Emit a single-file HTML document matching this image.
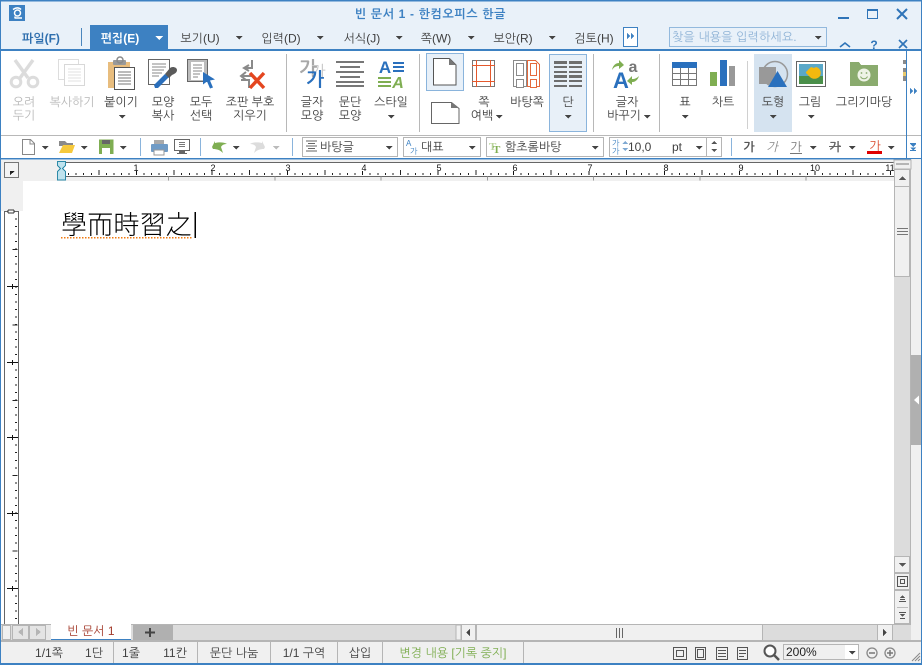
<!DOCTYPE html>
<html lang="ko"><head><meta charset="utf-8"><title>빈 문서 1 - 한컴오피스 한글</title>
<style>
html,body{margin:0;padding:0;background:#fff;overflow:hidden;width:922px;height:665px}
svg{display:block;position:absolute;left:0;top:0}
text{font-family:"Liberation Sans","NanumGothic","Noto Sans CJK KR",sans-serif;font-size:12px;fill:#404040}
.c{text-anchor:middle}
.d{fill:#b8b8b8}
.n{font-size:9px;fill:#111;text-anchor:middle;font-family:"Liberation Sans",sans-serif}
.k{font-family:"NanumGothic","Noto Sans CJK KR",sans-serif}
</style></head><body>
<svg width="922" height="665" viewBox="0 0 922 665" xmlns="http://www.w3.org/2000/svg" shape-rendering="crispEdges">
<defs>
<path id="a" d="M-3.5 0h7l-3.500 3.500z" fill="#444"/>
<path id="w" d="M-4 0h8l-4 4z" fill="#fff"/>
</defs>

<!-- window base -->
<rect width="922" height="665" fill="#fff"/>
<rect x="0" y="0" width="922" height="50" fill="#e9f1f9"/>
<!-- title -->
<rect x="9" y="5" width="16" height="16" fill="#3d81c2"/>
<g shape-rendering="auto"><path d="M13 9.500c3-2 6-2 8 0" fill="none" stroke="#fff" stroke-width="1.500"/><circle cx="17.500" cy="13" r="3" fill="none" stroke="#fff" stroke-width="1.500"/><path d="M15 18h7M15 16.500v2" fill="none" stroke="#fff" stroke-width="1.500"/></g>
<text x="430.500" y="18" class="c" style="fill:#3d81c2;font-weight:bold;letter-spacing:.65px">빈 문서 1 - 한컴오피스 한글</text>
<rect x="838" y="17" width="11" height="2" fill="#2f74b8"/>
<rect x="867.500" y="9.500" width="10" height="9" fill="none" stroke="#2f74b8"/><rect x="867" y="9" width="11" height="2" fill="#2f74b8"/>
<path d="M897 9l10 10M907 9l-10 10" stroke="#2f74b8" stroke-width="2" fill="none" shape-rendering="auto"/>

<!-- tabs -->
<text x="41" y="42.500" class="c" style="fill:#2f6fae;font-weight:bold">파일(F)</text>
<rect x="81" y="28" width="1" height="18" fill="#4a86bd"/>
<rect x="90" y="25" width="78" height="25" fill="#3d81c2"/>
<text x="120" y="42.500" class="c" style="fill:#fff;font-weight:bold">편집(E)</text>
<use href="#w" x="159" y="36"/>
<text x="200" y="42.500" class="c">보기(U)</text><use href="#a" x="239" y="36"/>
<text x="281" y="42.500" class="c">입력(D)</text><use href="#a" x="320" y="36"/>
<text x="362" y="42.500" class="c">서식(J)</text><use href="#a" x="399" y="36"/>
<text x="436" y="42.500" class="c">쪽(W)</text><use href="#a" x="471" y="36"/>
<text x="513" y="42.500" class="c">보안(R)</text><use href="#a" x="552" y="36"/>
<text x="594" y="42.500" class="c">검토(H)</text>
<rect x="623.500" y="27.500" width="14" height="19" fill="#fff" stroke="#3d81c2"/>
<path d="M627 33l3 3-3 3zM631 33l3 3-3 3z" fill="#3d81c2"/>
<rect x="669.500" y="27.500" width="157" height="19" fill="#e9f1f9" stroke="#93b9dd"/>
<text x="672" y="41" style="fill:#8fb3d6;letter-spacing:.15px">찾을 내용을 입력하세요.</text>
<use href="#a" x="818" y="36"/>
<path d="M840 47l5-4 5 4" stroke="#2f74b8" stroke-width="1.600" fill="none" shape-rendering="auto"/>
<text x="874" y="49" class="c" style="fill:#2f74b8;font-weight:bold;font-size:12px">?</text>
<path d="M899 40l8 8M907 40l-8 8" stroke="#2f74b8" stroke-width="1.700" fill="none" shape-rendering="auto"/>

<rect x="0" y="49" width="922" height="2" fill="#3d81c2"/>

<!-- ribbon separators -->
<rect x="286" y="54" width="1" height="78" fill="#b8b8b8"/>
<rect x="419" y="54" width="1" height="78" fill="#b8b8b8"/>
<rect x="593" y="54" width="1" height="78" fill="#b8b8b8"/>
<rect x="659" y="54" width="1" height="78" fill="#b8b8b8"/>
<rect x="747" y="61" width="1" height="68" fill="#d0d0d0"/>

<!-- ribbon highlights -->
<rect x="426.500" y="53.500" width="37" height="37" fill="#e8f0f8" stroke="#8ab4dc"/>
<rect x="549.500" y="54.500" width="37" height="77" fill="#e8f0f8" stroke="#8ab4dc"/>
<rect x="754" y="54" width="38" height="78" fill="#d5e3f0"/>

<g shape-rendering="auto">
<!-- scissors -->
<g fill="none" stroke="#dcdcdc">
<path d="M15 60l13 18M33 60l-13 18" stroke-width="3.400"/>
<circle cx="16" cy="82" r="4.800" stroke-width="3"/><circle cx="33" cy="82" r="4.800" stroke-width="3"/>
</g>
<!-- copy -->
<path d="M58.500 59.500h20v20h-20z" fill="#fff" stroke="#dddddd"/>
<path d="M64.500 64.500h20v21h-20z" fill="#fff" stroke="#d8d8d8"/>
<path d="M68 69h13M68 72h13M68 75h13M68 78h13M68 81h13" stroke="#e2e2e2"/>
<!-- paste -->
<rect x="108" y="62" width="22" height="26" fill="#e8bd7e"/>
<rect x="113" y="60" width="13" height="5" rx="1" fill="#9a9a9a"/><circle cx="120" cy="60" r="3" fill="none" stroke="#8a8a8a" stroke-width="1.500"/>
<rect x="114.500" y="67.500" width="20" height="22" fill="#fff" stroke="#555"/>
<path d="M118 72h13M118 75h13M118 78h13M118 81h13M118 84h13" stroke="#777"/>
<!-- format copy -->
<rect x="148.500" y="59.500" width="21" height="25" fill="#fff" stroke="#666"/>
<path d="M152 64h14M152 67h14M152 70h12M152 73h10M152 76h7" stroke="#8a8a8a"/>
<path d="M155 88l-1-3 11-11 4 3-11 11z" fill="#2a6ebb"/>
<path d="M165 74l5-6c2-2 7-1 7 2 0 3-3 4-5 5l-3 3z" fill="#5a5a5a"/>
<!-- select all -->
<rect x="187.500" y="59.500" width="20" height="22" fill="#bcbcbc" stroke="#666"/>
<rect x="191" y="62" width="13" height="18" fill="#fff"/>
<path d="M193 65h9M193 68h9M193 71h9M193 74h7M193 77h5" stroke="#888"/>
<path d="M203 72l12 7.500-5 1 3 7-3 1-3-7-4 3z" fill="#2a70bd"/>
<!-- clear marks -->
<path d="M252 60v8h-8M249 65l-5 3 5 3M252 76h-10M246 72l-5 4 5 4" fill="none" stroke="#8a8a8a" stroke-width="2"/>
<path d="M241 80h8v8" fill="none" stroke="#8a8a8a" stroke-width="2"/>
<path d="M250 73l14 15M264 73l-14 15" stroke="#e4461f" stroke-width="3.400"/>
<!-- char shape -->
<text x="308" y="75" class="c k" style="font-size:19px;font-weight:bold;fill:#a8a8a8">가</text>
<text x="318" y="77" class="c k" style="font-size:16px;fill:#c8c8c8">가</text>
<text x="315" y="86" class="c k" style="font-size:19px;font-weight:bold;fill:#2a70bd">가</text>
</g>
<!-- para -->
<g fill="#777"><rect x="336" y="61" width="28" height="2"/><rect x="340" y="66" width="20" height="2"/><rect x="336" y="71" width="28" height="2"/><rect x="340" y="76" width="20" height="2"/><rect x="336" y="81" width="28" height="2"/><rect x="336" y="85" width="28" height="2"/></g>
<!-- style -->
<text x="385" y="73" class="c" style="font-size:17px;font-weight:bold;fill:#2a70bd">A</text>
<g fill="#2a70bd"><rect x="393" y="62" width="11" height="2"/><rect x="393" y="66" width="11" height="2"/><rect x="393" y="70" width="11" height="2"/></g>
<g fill="#7fae52"><rect x="378" y="77" width="13" height="2"/><rect x="378" y="81" width="13" height="2"/><rect x="378" y="85" width="13" height="2"/></g>
<text x="398" y="88" class="c" style="font-size:16px;font-weight:bold;font-style:italic;fill:#7fae52">A</text>
<g shape-rendering="auto">
<!-- page icons -->
<path d="M433.500 58.500h16l6.500 6.500v20h-22.500z" fill="#fff" stroke="#555" stroke-width="1"/><path d="M449 58l7 7h-7z" fill="#777"/>
<path d="M431.500 102.500h20l7.500 6v15h-27.500z" fill="#fff" stroke="#666"/><path d="M451 102l8 6h-8z" fill="#777"/>
</g>
<!-- margin -->
<rect x="472.500" y="60.500" width="22" height="26" fill="#fff" stroke="#777"/>
<path d="M476.500 60v27M490.500 60v27M472 65.500h23M472 81.500h23" stroke="#e4582c" fill="none"/>
<!-- master page -->
<rect x="513.500" y="60.500" width="13" height="26" fill="#fff" stroke="#8a8a8a"/><rect x="516.500" y="63.500" width="7" height="12" fill="#fff" stroke="#8a8a8a"/><rect x="516.500" y="79.500" width="7" height="8" fill="#fff" stroke="#8a8a8a"/>
<path d="M527.500 60.500h8l4 4v22h-12z" fill="#fff" stroke="#e4693c"/><rect x="530.500" y="63.500" width="6" height="12" fill="#fff" stroke="#e4693c"/><rect x="530.500" y="79.500" width="6" height="8" fill="#fff" stroke="#e4693c"/>
<!-- columns -->
<g fill="#6e6e6e"><rect x="554" y="61" width="13" height="3"/><rect x="569" y="61" width="13" height="3"/><rect x="554" y="66" width="13" height="2"/><rect x="569" y="66" width="13" height="2"/><rect x="554" y="71" width="13" height="2"/><rect x="569" y="71" width="13" height="2"/><rect x="554" y="75" width="13" height="3"/><rect x="569" y="75" width="13" height="3"/><rect x="554" y="80" width="13" height="2"/><rect x="569" y="80" width="13" height="2"/><rect x="554" y="85" width="13" height="2"/><rect x="569" y="85" width="13" height="2"/></g>
<g shape-rendering="auto">
<!-- replace -->
<text x="621" y="88" class="c" style="font-size:22px;font-weight:bold;fill:#2a70bd">A</text>
<text x="633" y="72" class="c" style="font-size:16px;font-weight:bold;fill:#777">a</text>
<path d="M612 70c1-5 4-7 7-7l0-3 5 5-5 4v-3c-3 0-5 1-7 4z" fill="#7fae52"/>
<path d="M639 76c-1 4-4 6-7 6v3l-5-4 5-5v3c3 0 5-1 7-3z" fill="#7fae52"/>
</g>
<!-- table -->
<rect x="672" y="62" width="25" height="6" fill="#2a70bd"/>
<path d="M672.500 68v17.500h24V68M672 73.500h25M672 79.500h25M680.500 68v18M688.500 68v18" fill="none" stroke="#777"/>
<!-- chart -->
<rect x="710" y="72" width="7" height="14" fill="#7fae52"/><rect x="720" y="60" width="7" height="26" fill="#2a70bd"/><rect x="729" y="66" width="6" height="20" fill="#999"/>
<g shape-rendering="auto">
<!-- shape -->
<circle cx="775" cy="74" r="12.500" fill="none" stroke="#999" stroke-width="1.500"/>
<rect x="759" y="67" width="17" height="17" fill="#999"/>
<path d="M777.500 71l9.500 16h-19z" fill="#2a70bd"/>
</g>
<!-- picture -->
<rect x="796.500" y="61.500" width="29" height="25" fill="#fff" stroke="#666"/>
<rect x="799" y="64" width="24" height="20" fill="#5aa8c8"/><rect x="799" y="76" width="24" height="8" fill="#4a8f4a"/>
<g shape-rendering="auto"><path d="M806 72l5-5 3 1 2-1c4 1 6 5 4 9-2 3-7 4-10 1l-4-4z" fill="#f2b90f"/></g>
<!-- gallery -->
<path d="M850 62h9l2 3h17v21h-28z" fill="#8aab6e"/>
<g shape-rendering="auto"><circle cx="864" cy="75" r="6.500" fill="#eef3e6"/><path d="M860.500 76.500c1.500 3 5.500 3 7 0" stroke="#8aab6e" fill="none"/><circle cx="861.500" cy="73" r=".9" fill="#8aab6e"/><circle cx="866.500" cy="73" r=".9" fill="#8aab6e"/></g>
<rect x="903" y="60" width="3" height="21" fill="#8a8a8a"/><rect x="903" y="64" width="3" height="4" fill="#fff"/><rect x="903" y="72" width="3" height="4" fill="#e8c96e"/>

<!-- ribbon labels -->
<g class="c">
<text x="24" y="106" class="c d">오려</text><text x="24" y="119.500" class="c d">두기</text>
<text x="72" y="106" class="c d">복사하기</text>
<text x="121" y="106" class="c">붙이기</text><use href="#a" x="122" y="115"/>
<text x="163" y="106" class="c">모양</text><text x="163" y="119.500" class="c">복사</text>
<text x="201" y="106" class="c">모두</text><text x="201" y="119.500" class="c">선택</text>
<text x="250" y="106" class="c">조판 부호</text><text x="250" y="119.500" class="c">지우기</text>
<text x="312" y="106" class="c">글자</text><text x="312" y="119.500" class="c">모양</text>
<text x="350" y="106" class="c">문단</text><text x="350" y="119.500" class="c">모양</text>
<text x="391" y="106" class="c">스타일</text><use href="#a" x="391" y="115"/>
<text x="484" y="106" class="c">쪽</text><text x="482" y="119.500" class="c">여백</text><use href="#a" x="499" y="115"/>
<text x="527" y="106" class="c">바탕쪽</text>
<text x="568" y="106" class="c">단</text><use href="#a" x="568" y="115"/>
<text x="627" y="106" class="c">글자</text><text x="624" y="119.500" class="c">바꾸기</text><use href="#a" x="647" y="115"/>
<text x="685" y="106" class="c">표</text><use href="#a" x="685" y="115"/>
<text x="723" y="106" class="c">차트</text>
<text x="773" y="106" class="c">도형</text><use href="#a" x="773" y="115"/>
<text x="810" y="106" class="c">그림</text><use href="#a" x="811" y="115"/>
<text x="864" y="106" class="c">그리기마당</text>
</g>

<!-- right ribbon strip -->
<rect x="906" y="51" width="1" height="107" fill="#3d81c2"/>
<path d="M910 88l3 3-3 3zM914 88l3 3-3 3z" fill="#3d81c2"/>

<!-- toolbar -->
<rect x="0" y="135" width="906" height="1" fill="#b8b8b8"/><rect x="907" y="135" width="14" height="1" fill="#b8b8b8"/>
<g shape-rendering="auto">
<path d="M22.500 139.500h8l4 4v11h-12z" fill="#fff" stroke="#888"/><path d="M30 139v5h5" fill="none" stroke="#888"/>
<path d="M59 141h6l2 2h6v3h-14z" fill="#8a8a8a"/><path d="M59 153l4-8h12l-3 8z" fill="#f6c93c"/>
<rect x="99" y="139.500" width="14.500" height="14.500" fill="#7fae52"/><rect x="102" y="140" width="8" height="4" fill="#666"/><rect x="102" y="148" width="8" height="6" fill="#fff"/>
<rect x="151" y="144" width="17" height="8" rx="1" fill="#6f9bc6"/><rect x="154" y="140" width="10" height="4" fill="#aaa"/><rect x="154" y="150" width="10" height="5" fill="#fff" stroke="#999"/>
</g>
<rect x="174.500" y="139.500" width="15" height="11" fill="#fff" stroke="#666"/><path d="M179 142.500h6M179 144.500h6M179 146.500h6" stroke="#777"/><rect x="179" y="151" width="6" height="2" fill="#666"/><rect x="177" y="153" width="10" height="1" fill="#666"/>
<g shape-rendering="auto">
<path d="M212 147l3-6v2c4-1 9-1 12 1-3 0-5 1-6 3l2 6c-3-3-6-4-10-4z" fill="#7fae52"/>
<path d="M265 147l-3-6v2c-4-1-9-1-12 1 3 0 5 1 6 3l-2 6c3-3 6-4 10-4z" fill="#dcdcdc"/>
</g>
<use href="#a" x="45" y="146"/><use href="#a" x="84" y="146"/><use href="#a" x="123" y="146"/><use href="#a" x="236" y="146"/>
<path d="M272.500 146h7l-3.500 3.500z" fill="#bbb"/>
<rect x="140" y="138" width="1" height="18" fill="#8ab4dc"/><rect x="200" y="138" width="1" height="18" fill="#8ab4dc"/><rect x="292" y="138" width="1" height="18" fill="#8ab4dc"/><rect x="731" y="138" width="1" height="18" fill="#8ab4dc"/>

<rect x="302.500" y="137.500" width="95" height="19" fill="#fff" stroke="#b5b5b5"/>
<path d="M306 141h11M308 143.500h7M306 146h11M308 148.500h7M306 151h11" stroke="#666"/>
<text x="320" y="151">바탕글</text><use href="#a" x="389" y="146"/>
<rect x="403.500" y="137.500" width="77" height="19" fill="#fff" stroke="#b5b5b5"/>
<text x="406" y="146" style="font-size:8px;fill:#3d81c2">A</text><text x="410" y="154" style="font-size:8px;fill:#3d81c2">가</text>
<text x="421" y="151">대표</text><use href="#a" x="472" y="146"/>
<rect x="486.500" y="137.500" width="117" height="19" fill="#fff" stroke="#b5b5b5"/>
<text x="489" y="150" style="font-size:11px;font-weight:bold;fill:#b9d39c;font-family:'Liberation Serif',serif">T</text><text x="493" y="153" style="font-size:11px;font-weight:bold;fill:#7fae52;font-family:'Liberation Serif',serif">T</text>
<text x="505" y="151">함초롬바탕</text><use href="#a" x="595" y="146"/>
<rect x="609.500" y="137.500" width="112" height="19" fill="#fff" stroke="#b5b5b5"/><rect x="706" y="138" width="1" height="18" fill="#b5b5b5"/>
<text x="612" y="146" style="font-size:8px;fill:#3d81c2">가</text><text x="612" y="154" style="font-size:8px;fill:#3d81c2">가</text>
<path d="M622 144l3-3 3 3zM622 148h6l-3 3z" fill="#7fa9d2"/>
<text x="628" y="151">10,0</text><text x="672" y="151">pt</text><use href="#a" x="699" y="146"/>
<path d="M711 144l3-3 3 3zM711 149h6l-3 3z" fill="#555"/>
<text x="749" y="151" class="c" style="font-weight:bold;fill:#555">가</text>
<text x="772" y="151" class="c" style="font-style:italic;fill:#888">가</text>
<text x="796" y="151" class="c" style="fill:#777">가</text><rect x="790" y="153" width="12" height="1" fill="#777"/><use href="#a" x="813" y="146"/>
<text x="835" y="151" class="c" style="fill:#666;font-weight:bold">가</text><rect x="829" y="146" width="12" height="1" fill="#666"/><use href="#a" x="852" y="146"/>
<text x="875" y="150" class="c" style="fill:#d8472a">가</text><rect x="867" y="151" width="15" height="3" fill="#e00000"/><use href="#a" x="891" y="146"/>
<rect x="907" y="135" width="14" height="23" fill="#fff"/><rect x="907" y="135" width="14" height="1" fill="#b8b8b8"/>
<path d="M910 143.500h6M910 150.500h6" stroke="#3d81c2"/><path d="M910 144l3 3 3-3zM910 147.500l3 3 3-3z" fill="#3d81c2"/>
<rect x="0" y="158" width="922" height="1.500" fill="#3d81c2"/>

<!-- ruler -->
<rect x="1" y="160" width="893" height="21" fill="#f0f0f0"/>
<rect x="4.500" y="162.500" width="14" height="15" fill="#f4f4f4" stroke="#777"/>
<path d="M10 171h5l-5 4z" fill="#222"/>
<rect x="60" y="162" width="834" height="14" fill="#fff"/>
<rect x="57" y="162" width="837" height="1" fill="#666"/><rect x="57" y="176" width="837" height="1" fill="#666"/>
<line x1="60.600" y1="174" x2="894" y2="174" stroke="#222" stroke-width="2" stroke-dasharray="1 6.540"/>
<line x1="98.300" y1="172.500" x2="894" y2="172.500" stroke="#222" stroke-width="5" stroke-dasharray="1 74.400"/>
<line x1="136" y1="173" x2="894" y2="173" stroke="#111" stroke-width="4" stroke-dasharray="1 74.400"/>
<g>
<text x="136" y="171" class="n">1</text><text x="213" y="171" class="n">2</text><text x="288" y="171" class="n">3</text><text x="364" y="171" class="n">4</text><text x="439" y="171" class="n">5</text><text x="515" y="171" class="n">6</text><text x="590" y="171" class="n">7</text><text x="666" y="171" class="n">8</text><text x="741" y="171" class="n">9</text><text x="815" y="171" class="n">10</text><text x="890" y="171" class="n">11</text>
</g>
<line x1="168" y1="177" x2="894" y2="177" stroke="#999" stroke-width="4" stroke-dasharray="1 105.250" transform="translate(0 1.500)"/>
<path d="M57.500 161.500h8v4l-3 3 3 3v8.500h-8v-8.500l3-3-3-3z" fill="#bfe3ee" stroke="#2d8aa8"/>

<!-- left gutter + vertical ruler -->
<rect x="1" y="181" width="22" height="30" fill="#f0f0f0"/>
<rect x="4" y="211" width="1" height="413" fill="#666"/><rect x="18" y="211" width="1" height="413" fill="#666"/><rect x="4" y="211" width="15" height="1" fill="#666"/>
<rect x="8" y="210" width="6" height="3" rx="1" fill="#fff" stroke="#333"/>
<line x1="16" y1="218.500" x2="16" y2="624" stroke="#222" stroke-width="2" stroke-dasharray="1 6.540"/>
<line x1="15" y1="249" x2="15" y2="624" stroke="#222" stroke-width="5" stroke-dasharray="1 74.400"/>
<g fill="#111"><rect x="7" y="286" width="11" height="1"/><rect x="7" y="362" width="11" height="1"/><rect x="7" y="437" width="11" height="1"/><rect x="7" y="513" width="11" height="1"/><rect x="7" y="588" width="11" height="1"/></g>
<g fill="#111"><rect x="12" y="284" width="1" height="5"/><rect x="12" y="360" width="1" height="5"/><rect x="12" y="435" width="1" height="5"/><rect x="12" y="511" width="1" height="5"/><rect x="12" y="586" width="1" height="5"/></g>

<!-- document text -->
<text x="61" y="234" style="font-family:'Noto Sans CJK KR','WenQuanYi Zen Hei',sans-serif;font-size:26px;font-weight:300;fill:#000;letter-spacing:.2px">學而時習之</text>
<line x1="61" y1="237.500" x2="193" y2="237.500" stroke="#f07a10" stroke-width="1.500" stroke-dasharray="1.500 1.500"/>
<rect x="194.500" y="212" width="1.500" height="26" fill="#000"/>

<!-- v scrollbar -->
<rect x="894" y="160" width="17" height="464" fill="#dcdcdc"/>
<rect x="910" y="160" width="1" height="464" fill="#b5b5b5"/>
<rect x="911" y="159" width="10" height="482" fill="#f0f0f0"/>
<rect x="911" y="355" width="10" height="90" fill="#b0b0b0"/>
<path d="M914 400l5-4.500v9z" fill="#fff" shape-rendering="auto"/>
<rect x="894" y="160" width="17" height="9" fill="#f0f0f0" stroke="#b5b5b5" stroke-width="1"/>
<rect x="896" y="163" width="13" height="2" fill="#b5b5b5"/>
<rect x="894.500" y="169.500" width="15" height="17" fill="#f0f0f0" stroke="#b5b5b5"/>
<path d="M899 180l3.500-4 3.500 4z" fill="#555"/>
<rect x="894.500" y="186.500" width="15" height="90" fill="#f0f0f0" stroke="#b5b5b5"/>
<path d="M897 228.500h11M897 231.500h11M897 234.500h11" stroke="#777"/>
<rect x="894.500" y="556.500" width="15" height="16" fill="#f0f0f0" stroke="#b5b5b5"/>
<path d="M899 563h7l-3.500 4z" fill="#555"/>
<rect x="894.500" y="573.500" width="15" height="16" fill="#f0f0f0" stroke="#b5b5b5"/>
<rect x="897.500" y="576.500" width="10" height="10" fill="none" stroke="#555"/><rect x="900.500" y="579.500" width="4" height="4" fill="none" stroke="#555"/>
<rect x="894.500" y="590.500" width="15" height="33" fill="#f0f0f0" stroke="#b5b5b5"/>
<rect x="897" y="607" width="11" height="1" fill="#bbb"/>
<path d="M900 598l2.500-3 2.500 3zM900 599h5v1h-5zM899 601h7v1h-7zM899 612h7v1h-7zM900 614h5l-2.500 3zM900 618h5v1h-5z" fill="#555"/>

<!-- bottom tabs -->
<rect x="1" y="624" width="910" height="17" fill="#dcdcdc"/>
<rect x="1" y="624" width="910" height="1" fill="#b5b5b5"/><rect x="1" y="640" width="910" height="1" fill="#b5b5b5"/>
<rect x="2.500" y="625.500" width="8" height="14" fill="#f0f0f0" stroke="#b5b5b5"/><rect x="12.500" y="625.500" width="16" height="14" fill="#e4e4e4" stroke="#b5b5b5"/><rect x="29.500" y="625.500" width="16" height="14" fill="#e4e4e4" stroke="#b5b5b5"/>
<path d="M23 628v8l-5-4zM36 628v8l5-4z" fill="#b5b5b5"/><rect x="46" y="625" width="5" height="15" fill="#e8e8e8"/>
<rect x="51" y="624" width="80" height="15" fill="#fff"/><rect x="51" y="639" width="80" height="2" fill="#3d81c2"/>
<text x="91" y="635" class="c" style="fill:#a33a2a">빈 문서 1</text>
<rect x="133" y="625" width="40" height="15" fill="#b0b0b0"/>
<path d="M145 631.500h10v2h-10zM149 628h2v9h-2z" fill="#444"/>
<rect x="456" y="625" width="5" height="15" fill="#f0f0f0" stroke="#b5b5b5"/>
<rect x="461.500" y="624.500" width="14" height="16" fill="#f0f0f0" stroke="#b5b5b5"/><path d="M470 629v7l-4-3.500z" fill="#444"/>
<rect x="476.500" y="624.500" width="286" height="16" fill="#f0f0f0" stroke="#b5b5b5"/>
<path d="M616.500 628v10M619.500 628v10M622.500 628v10" stroke="#666"/>
<rect x="877.500" y="624.500" width="15" height="16" fill="#f0f0f0" stroke="#b5b5b5"/><path d="M883 629v7l4-3.500z" fill="#444"/>

<!-- status -->
<rect x="1" y="641" width="920" height="22" fill="#f0f0f0"/>
<rect x="1" y="640" width="920" height="2" fill="#b5b5b5"/>
<g fill="#b5b5b5"><rect x="113" y="642" width="1" height="21"/><rect x="197" y="642" width="1" height="21"/><rect x="270" y="642" width="1" height="21"/><rect x="337" y="642" width="1" height="21"/><rect x="382" y="642" width="1" height="21"/><rect x="523" y="642" width="1" height="21"/></g>
<text x="49" y="657" class="c">1/1쪽</text><text x="94" y="657" class="c">1단</text><text x="131" y="657" class="c">1줄</text><text x="175" y="657" class="c">11칸</text><text x="234" y="657" class="c">문단 나눔</text><text x="304" y="657" class="c">1/1 구역</text><text x="360" y="657" class="c">삽입</text>
<text x="453" y="657" class="c" style="fill:#7fae52">변경 내용 [기록 중지]</text>
<rect x="673.500" y="647.500" width="13" height="12" fill="none" stroke="#555"/><rect x="676.500" y="650.500" width="7" height="6" fill="none" stroke="#555"/>
<rect x="695.500" y="647.500" width="10" height="12" fill="none" stroke="#555"/><rect x="697.500" y="649.500" width="6" height="8" fill="none" stroke="#555"/>
<path d="M716.500 647.500h11v12h-11zM718 650.500h8M718 653.500h8M718 656.500h8" fill="none" stroke="#555"/>
<path d="M737.500 647.500h10v12h-10zM739 650.500h7M739 653.500h7M739 656.500h5" fill="none" stroke="#555"/>
<g shape-rendering="auto"><circle cx="770" cy="651" r="5.500" fill="#fff" stroke="#555" stroke-width="2"/><path d="M774 655l5 5" stroke="#555" stroke-width="2.500"/>
<circle cx="872" cy="653" r="5" fill="none" stroke="#888" stroke-width="1.300"/><path d="M869 653h6" stroke="#777" stroke-width="1.500"/>
<circle cx="890" cy="653" r="5" fill="none" stroke="#888" stroke-width="1.300"/><path d="M887 653h6M890 650v6" stroke="#777" stroke-width="1.500"/>
<path d="M912 661l8-8M915 661l5-5M918 661l2-2" stroke="#888"/></g>
<rect x="783.500" y="644.500" width="75" height="15" fill="#f0f0f0" stroke="#b5b5b5"/><rect x="845" y="645" width="13" height="14" fill="#fff"/>
<text x="786" y="656" style="fill:#222">200%</text><use href="#a" x="852" y="651"/>

<!-- window border -->
<rect x="0" y="0" width="922" height="1.500" fill="#3d81c2"/>
<rect x="0" y="0" width="1" height="665" fill="#3d81c2"/>
<rect x="921" y="0" width="1" height="665" fill="#3d81c2"/>
<rect x="0" y="663" width="922" height="2" fill="#3d81c2"/>
</svg>
</body></html>
